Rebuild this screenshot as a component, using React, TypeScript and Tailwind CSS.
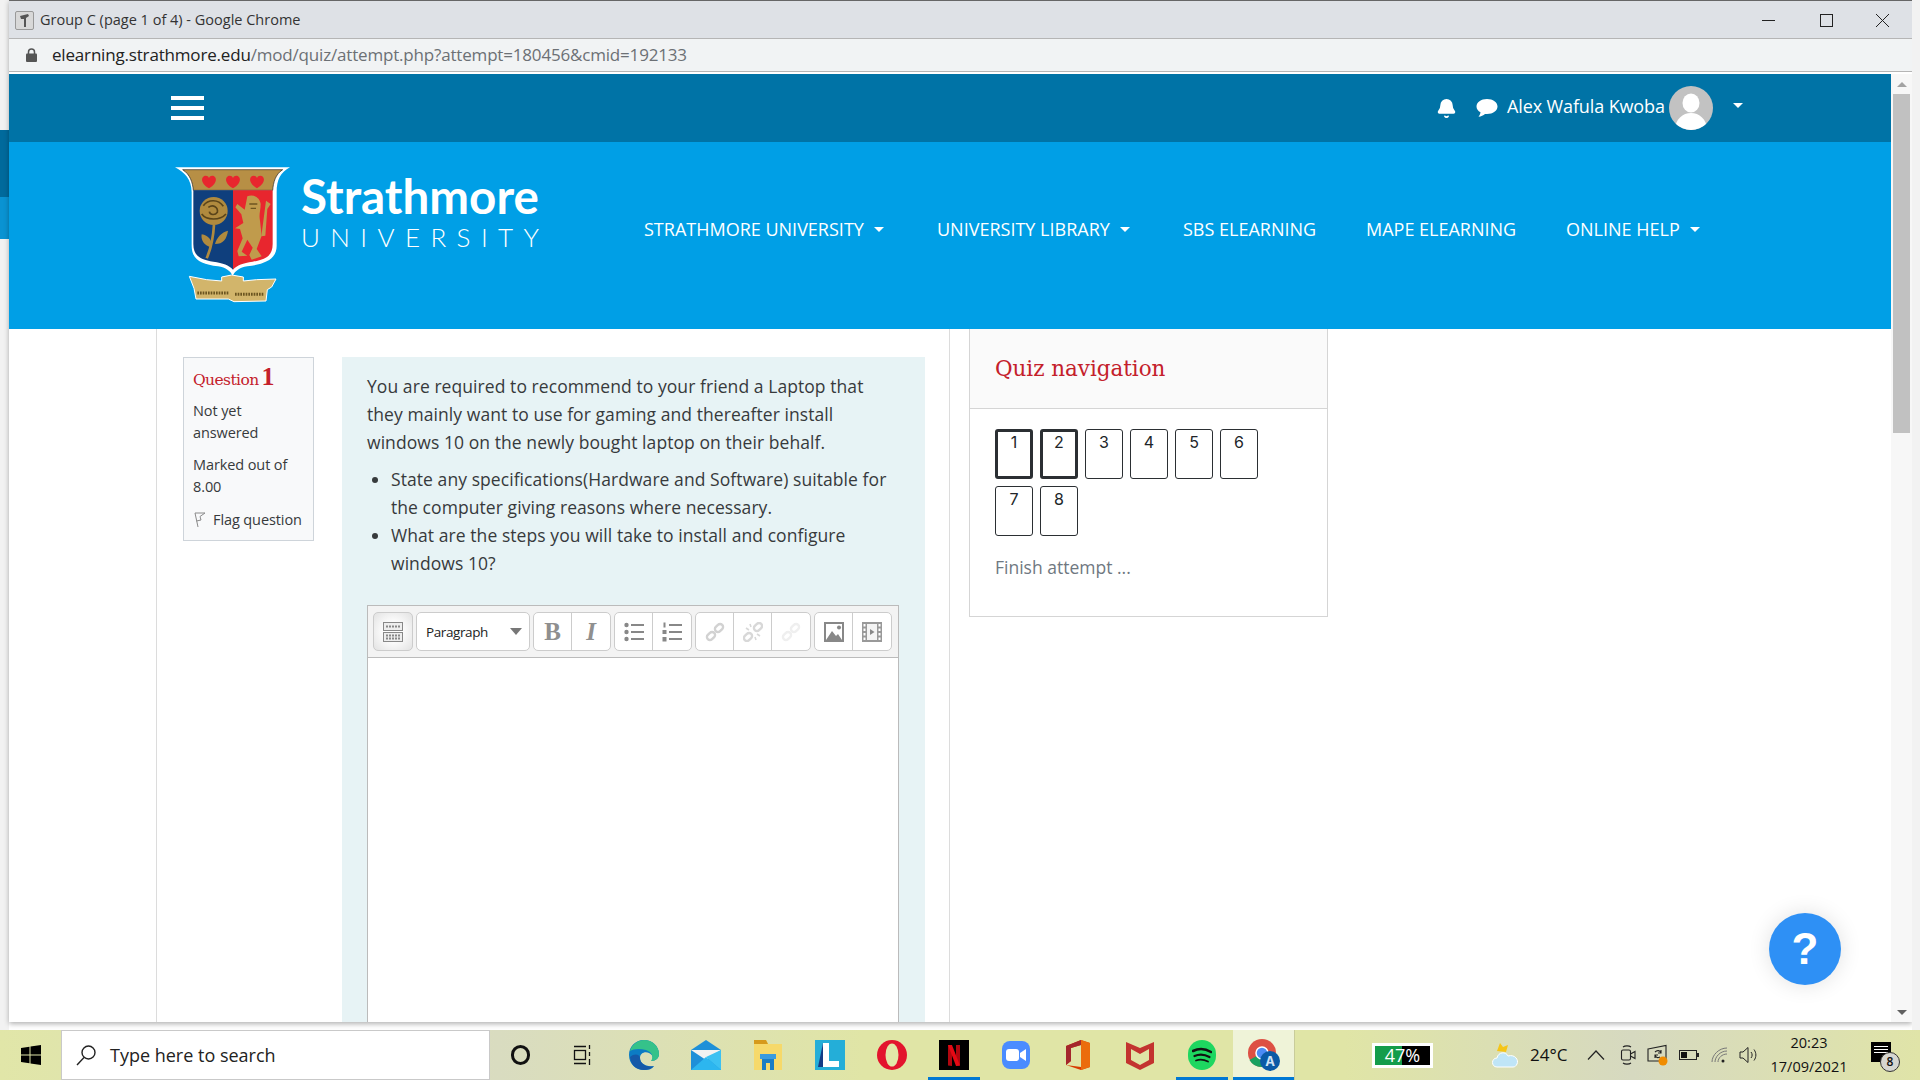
import React from "react";
import { Bell } from "lucide-react";

const sans = "font-['Open_Sans','Noto_Sans',sans-serif]";

function Caret({ className = "" }: { className?: string }) {
  return <span className={`inline-block w-0 h-0 border-l-[5px] border-r-[5px] border-t-[5px] border-l-transparent border-r-transparent border-t-white ${className}`} />;
}

function Crest() {
  return (
    <svg width="150" height="170" viewBox="0 0 450 510" className="shrink-0">
      <path d="M45 55H390C362 70 350 92 350 130V290C350 332 312 346 262 352C238 356 226 366 218 380C211 366 198 356 174 352C124 346 95 332 95 290V130C95 92 74 70 45 55Z" fill="#fff" />
      <path d="M68 62H368C346 76 340 100 338 124H100C98 100 90 76 68 62Z" fill="#b78f45" stroke="#222" strokeWidth="2" />
      <path d="M100 124H219V362C206 348 190 342 160 338C120 332 100 320 100 285Z" fill="#0f3f7d" />
      <path d="M219 124H338V285C338 320 318 332 278 338C248 342 232 348 219 362Z" fill="#e8262e" />
      {[147, 219, 291].map((x) => (
        <path key={x} d={`M${x} 118C${x - 30} 100 ${x - 22} 80 ${x - 10} 80C${x - 4} 80 ${x} 84 ${x} 88C${x} 84 ${x + 4} 80 ${x + 10} 80C${x + 22} 80 ${x + 30} 100 ${x} 118Z`} fill="#e8262e" />
      ))}
      <circle cx="161" cy="186" r="42" fill="#b08a3e" />
      <path d="M130 170C145 150 175 150 190 172M125 195C140 215 180 215 198 195M145 175C160 165 175 175 172 190C165 200 150 198 148 188" fill="none" stroke="#5a441a" strokeWidth="5" />
      <path d="M162 226C160 265 152 300 140 328" stroke="#b08a3e" strokeWidth="8" fill="none" />
      <path d="M155 295C130 290 122 270 125 256C145 258 158 275 155 295ZM165 285C170 265 185 250 204 245C200 270 190 285 165 285Z" fill="#b08a3e" />
      <path d="M262 142C280 135 300 145 302 165C302 185 296 195 300 215L305 260L290 300L305 322L275 332L268 318L278 296L262 272L245 308L262 320L236 322L232 306L248 268L240 240L225 238L250 222L244 196L226 175L232 165L254 182Z" fill="#c09b4c" />
      <path d="M268 165L292 165M272 178L288 178" stroke="#6e5520" strokeWidth="4" />
      <path d="M318 155L332 165L322 180L316 260L304 262Z" fill="#c09b4c" />
      <path d="M88 382L140 392L185 396V384L215 378L250 384V396L290 392L348 390L335 414L322 422L318 456L222 458L205 450L108 450L102 418Z" fill="#d2b56b" stroke="#fff" strokeWidth="3" />
      <path d="M112 432H205M225 436H312" stroke="#6b5520" strokeWidth="9" strokeDasharray="5 3" />
    </svg>
  );
}

function NavItem({ label, caret, w }: { label: string; caret?: boolean; w: string }) {
  return (
    <div className={`flex items-center shrink-0 ${w}`}>
      <span className="text-[18px] whitespace-nowrap">{label}</span>
      {caret && <Caret className="ml-[10px]" />}
    </div>
  );
}

function ToolIcon({ children, w = "w-[38px]", last }: { children: React.ReactNode; w?: string; last?: boolean }) {
  return <div className={`${w} h-full flex items-center justify-center ${last ? "" : "border-r border-[#ccc]"}`}>{children}</div>;
}

function Group({ children }: { children: React.ReactNode }) {
  return <div className="h-[39px] flex border border-[#ccc] rounded-[5px] bg-white shrink-0 overflow-hidden">{children}</div>;
}

function ChainIcon({ c, broken }: { c: string; broken?: boolean }) {
  return (
    <svg width="20" height="20" viewBox="0 0 20 20" fill="none" stroke={c} strokeWidth="2.4">
      <rect x="-4.5" y="-3" width="9" height="6" rx="3" transform={broken ? "translate(5 15) rotate(-45)" : "translate(6 14) rotate(-45)"} />
      <rect x="-4.5" y="-3" width="9" height="6" rx="3" transform={broken ? "translate(15 5) rotate(-45)" : "translate(14 6) rotate(-45)"} />
      {broken && <path d="M3 6L6 8M7 2L8 5M17 14L14 12M13 18L12 15" strokeWidth="1.6" />}
    </svg>
  );
}

function Toolbar() {
  return (
    <div className="h-[52px] bg-[#f3f3f3] border-b border-[#bbb] flex items-center gap-[3px] pl-[5px]">
      <div className="w-[40px] h-[39px] border border-[#ccc] rounded-[5px] bg-[radial-gradient(circle,#fff_30%,#e2e2e2_100%)] flex items-center justify-center shrink-0">
        <svg width="20" height="20" viewBox="0 0 20 20">
          <rect x="0.5" y="0.5" width="19" height="8" fill="#eee" stroke="#888" />
          <rect x="0.5" y="10.5" width="19" height="9" fill="#eee" stroke="#888" />
          <path d="M3 4.5H17M3 13.5H17M3 16.5H17" stroke="#888" strokeWidth="2" strokeDasharray="2 1" />
        </svg>
      </div>
      <div className="w-[114px] h-[39px] border border-[#ccc] rounded-[5px] bg-white flex items-center pl-[9px] pr-[7px] justify-between shrink-0">
        <span className="text-[13.5px] tracking-[-0.4px] text-[#222]">Paragraph</span>
        <span className="w-0 h-0 border-l-[6px] border-r-[6px] border-t-[7px] border-l-transparent border-r-transparent border-t-[#777]" />
      </div>
      <Group>
        <ToolIcon><span className="font-['Liberation_Serif',serif] font-bold text-[25px] text-[#8f8f8f]">B</span></ToolIcon>
        <ToolIcon last><span className="font-['Liberation_Serif',serif] font-bold italic text-[25px] text-[#8f8f8f]">I</span></ToolIcon>
      </Group>
      <Group>
        <ToolIcon>
          <svg width="20" height="20" viewBox="0 0 20 20" fill="#888">
            <circle cx="2.5" cy="3" r="2.2" /><circle cx="2.5" cy="10" r="2.2" /><circle cx="2.5" cy="17" r="2.2" />
            <rect x="7" y="2" width="13" height="2" /><rect x="7" y="9" width="13" height="2" /><rect x="7" y="16" width="13" height="2" />
          </svg>
        </ToolIcon>
        <ToolIcon last>
          <svg width="20" height="20" viewBox="0 0 20 20" fill="#888">
            <rect x="1.5" y="0.5" width="2" height="5" /><rect x="0.5" y="8" width="4" height="4" /><rect x="0.5" y="15" width="4" height="4.5" />
            <rect x="7" y="2" width="13" height="2" /><rect x="7" y="9" width="13" height="2" /><rect x="7" y="16" width="13" height="2" />
          </svg>
        </ToolIcon>
      </Group>
      <Group>
        <ToolIcon><ChainIcon c="#d2d2d2" /></ToolIcon>
        <ToolIcon><ChainIcon c="#d8d8d8" broken /></ToolIcon>
        <ToolIcon last><ChainIcon c="#efefef" /></ToolIcon>
      </Group>
      <Group>
        <ToolIcon>
          <svg width="20" height="20" viewBox="0 0 20 20">
            <rect x="1" y="1" width="18" height="18" fill="#fff" stroke="#888" strokeWidth="2" />
            <path d="M2 18L8 9L12 14L14 12L18 18Z" fill="#888" /><circle cx="15" cy="5.5" r="2" fill="#888" />
          </svg>
        </ToolIcon>
        <ToolIcon last>
          <svg width="20" height="20" viewBox="0 0 20 20">
            <rect x="0" y="0" width="20" height="20" fill="#999" />
            <rect x="5" y="2" width="10" height="16" fill="#f4f4f4" />
            {[2, 6.5, 11, 15.5].map((y) => (<g key={y}><rect x="1.5" y={y} width="2" height="2.5" fill="#fff" /><rect x="16.5" y={y} width="2" height="2.5" fill="#fff" /></g>))}
            <path d="M8 7L12.5 10L8 13Z" fill="#888" />
          </svg>
        </ToolIcon>
      </Group>
    </div>
  );
}

function QuizBtn({ n, current }: { n: number; current?: boolean }) {
  return (
    <div className={`w-[38px] h-[50px] rounded-[3px] border-[#2b2f33] flex justify-center font-['Inter','DejaVu_Sans',sans-serif] text-[16px] leading-[20px] text-[#212529] ${current ? "border-[3px]" : "border pt-[2px]"}`}>
      {n}
    </div>
  );
}

function Slot({ children, w = "w-[62px]", extra = "" }: { children: React.ReactNode; w?: string; extra?: string }) {
  return <div className={`${w} h-full shrink-0 relative flex items-center justify-center ${extra}`}>{children}</div>;
}

function Underline() {
  return <div className="absolute bottom-0 left-[5px] right-[5px] h-[3px] bg-[#0078d4]" />;
}

function App() {
  return (
    <div className={`w-[1920px] h-[1080px] overflow-hidden flex flex-col bg-white text-[#212529] ${sans}`}>
      <div className="flex h-[1030px] shrink-0">
        <div className="w-[9px] shrink-0 flex flex-col bg-[#f2f2f2]">
          <div className="h-[130px]" />
          <div className="h-[67px] bg-[#006a9c]" />
          <div className="h-[42px] bg-[#0a93d2]" />
        </div>
        <div className="w-[1903px] shrink-0 flex flex-col shadow-[0_2px_5px_rgba(0,0,0,0.3)] h-[1022px] bg-white">
          <div className="h-[38px] shrink-0 bg-[#dee1e6] border-t border-[#666] flex items-center pl-[6px] text-[14.5px] text-[#333]">
            <svg width="19" height="19" viewBox="0 0 19 19" className="mr-[6px] mt-[1px]">
              <rect x="0.5" y="0.5" width="18" height="18" rx="1.5" fill="#d8d8d8" stroke="#999" />
              <path d="M5 5L13 3L14 5L11 7V16H9V8L6 8Z" fill="#555" />
            </svg>
            <span className="grow whitespace-nowrap">Group C (page 1 of 4) - Google Chrome</span>
            <svg width="160" height="16" viewBox="0 0 160 16" fill="none" stroke="#222" strokeWidth="1">
              <path d="M10 8.5H23" />
              <rect x="68.5" y="2.5" width="12" height="12" />
              <path d="M124 2L137 15M137 2L124 15" />
            </svg>
          </div>
          <div className="h-[34px] shrink-0 bg-[#f1f3f4] border-t border-[#b5b5b5] border-b flex items-center pl-[17px] text-[17px] tracking-[-0.18px]">
            <svg width="11" height="14" viewBox="0 0 11 14" fill="#555" className="mr-[15px]">
              <path d="M2.5 6V4A3 3 0 018.5 4V6" fill="none" stroke="#555" strokeWidth="1.5" />
              <rect x="0" y="5.5" width="11" height="8.5" rx="1" />
            </svg>
            <span className="text-[#222]">elearning.strathmore.edu</span>
            <span className="text-[#6c7075]">/mod/quiz/attempt.php?attempt=180456&amp;cmid=192133</span>
          </div>
          <div className="h-[2px] shrink-0 bg-white" />
          <div className="flex grow min-h-0">
            <div className="w-[1882px] shrink-0 flex flex-col">
              <div className="h-[68px] shrink-0 bg-[#0073a6] flex items-center text-white">
                <div className="ml-[162px] w-[33px] h-[24px] flex flex-col justify-between">
                  <div className="h-[4px] bg-white" /><div className="h-[4px] bg-white" /><div className="h-[4px] bg-white" />
                </div>
                <div className="ml-[1232px] flex items-center">
                  <Bell className="w-[21px] h-[21px] fill-white text-white" />
                  <svg width="22" height="20" viewBox="0 0 22 20" fill="#fff" className="ml-[19px]">
                    <path d="M11 1C5 1 0.5 4.2 0.5 8.5C0.5 11 2 13 4.5 14.3C4.3 16 3.5 17.5 2.5 18.8C5 18.5 7.5 17.5 9 16H11C17 16 21.5 12.8 21.5 8.5C21.5 4.2 17 1 11 1Z" />
                  </svg>
                  <span className="ml-[9px] text-[18px] tracking-[-0.12px] whitespace-nowrap -mt-[4px]">Alex Wafula Kwoba</span>
                  <div className="ml-[4px] w-[44px] h-[44px] rounded-full bg-[#c2c2c2] overflow-hidden shrink-0">
                    <svg viewBox="0 0 44 44" width="44" height="44" fill="#fff">
                      <ellipse cx="22" cy="17" rx="8.5" ry="9.5" />
                      <path d="M6 44C6 33 14 27 22 27C30 27 38 33 38 44Z" />
                    </svg>
                  </div>
                  <Caret className="ml-[20px] -mt-[6px]" />
                </div>
              </div>
              <div className="h-[187px] shrink-0 bg-[#009fe6] flex items-center text-white">
                <div className="ml-[151px] -mt-[3px]"><Crest /></div>
                <div className="ml-[-9px] flex flex-col w-[343px] -mt-[50px]">
                  <span className="font-['Lato',sans-serif] font-bold text-[47.5px] leading-[53px]">Strathmore</span>
                  <span className="font-['Lato',sans-serif] font-light text-[26px] leading-[30px] tracking-[10.4px] whitespace-nowrap">UNIVERSITY</span>
                </div>
                <div className="flex -mt-[12px]">
                  <NavItem label="STRATHMORE UNIVERSITY" caret w="w-[293px]" />
                  <NavItem label="UNIVERSITY LIBRARY" caret w="w-[246px]" />
                  <NavItem label="SBS ELEARNING" w="w-[183px]" />
                  <NavItem label="MAPE ELEARNING" w="w-[200px]" />
                  <NavItem label="ONLINE HELP" caret w="w-[160px]" />
                </div>
              </div>
              <div className="flex grow min-h-0 overflow-hidden relative">
                <div className="w-[148px] shrink-0 border-r border-[#dcdcdc]" />
                <div className="w-[793px] shrink-0 border-r border-[#dcdcdc] pt-[28px] pl-[26px] flex items-start h-full">
                  <div className="w-[131px] shrink-0 border border-[#ced4da] bg-[#f8f9fa] pl-[9px] pt-[4px] h-[184px] text-[14.5px] leading-[22px] tracking-[-0.1px] text-[#373a3c]">
                    <div className="text-[#c4202a] font-['DejaVu_Serif',serif] text-[15.5px] leading-[30px] tracking-[-0.6px] flex items-baseline">
                      Question<span className="font-['Liberation_Serif',serif] font-bold text-[26px] ml-[3px]">1</span>
                    </div>
                    <div className="mt-[5px]">Not yet<br />answered</div>
                    <div className="mt-[10px]">Marked out of<br />8.00</div>
                    <div className="mt-[11px] flex items-center">
                      <svg width="13" height="16" viewBox="0 0 13 16" fill="none" stroke="#8a8a8a" strokeWidth="1" className="mr-[7px] shrink-0">
                        <path d="M2 1L5 15M2 1H12L7 4.5L8 8L3.5 9" />
                      </svg>
                      <span className="whitespace-nowrap">Flag question</span>
                    </div>
                  </div>
                  <div className="ml-[28px] w-[583px] shrink-0 h-[900px] bg-[#e7f3f5] pl-[25px] pr-[26px] pt-[15px] text-[17.5px] leading-[28px] tracking-[0.07px] text-[#373a3c]">
                    <p>You are required to recommend to your friend a Laptop that they mainly want to use for gaming and thereafter install windows 10 on the newly bought laptop on their behalf.</p>
                    <ul className="list-disc pl-[24px] mt-[9px] mb-[28px]">
                      <li>State any specifications(Hardware and Software) suitable for the computer giving reasons where necessary.</li>
                      <li>What are the steps you will take to install and configure windows 10?</li>
                    </ul>
                    <div className="border border-[#bbb] h-[500px] bg-white tracking-normal">
                      <Toolbar />
                    </div>
                  </div>
                </div>
                <div className="ml-[19px] w-[359px] h-[288px] shrink-0 border border-[#d5d5d5] border-t-0 flex flex-col">
                  <div className="h-[80px] bg-[#fafafa] border-b border-[#d5d5d5] pl-[25px] pt-[2px] flex items-center">
                    <span className="font-['DejaVu_Serif',serif] text-[21.5px] tracking-[-0.05px] text-[#c4202a]">Quiz navigation</span>
                  </div>
                  <div className="pl-[25px] pt-[20px] flex flex-col">
                    <div className="flex gap-[7px]">
                      <QuizBtn n={1} current /><QuizBtn n={2} current /><QuizBtn n={3} /><QuizBtn n={4} /><QuizBtn n={5} /><QuizBtn n={6} />
                    </div>
                    <div className="flex gap-[7px] mt-[7px]">
                      <QuizBtn n={7} /><QuizBtn n={8} />
                    </div>
                    <div className="mt-[19px] text-[17.5px] leading-[24px] text-[#6f7881]">Finish attempt ...</div>
                  </div>
                </div>
                <div className="absolute left-[1760px] top-[584px] w-[72px] h-[72px] rounded-full bg-[#2e90f5] shadow-[0_0_22px_rgba(0,0,0,0.12)] flex items-center justify-center text-white font-['Liberation_Sans',sans-serif] font-bold text-[44px]">?</div>
              </div>
            </div>
            <div className="w-[21px] shrink-0 bg-[#f7f7f7] flex flex-col items-center">
              <div className="h-[20px] shrink-0 flex items-center justify-center"><span className="w-0 h-0 border-l-[5px] border-r-[5px] border-b-[5px] border-l-transparent border-r-transparent border-b-[#a3a3a3]" /></div>
              <div className="w-[17px] h-[339px] bg-[#c1c1c1] shrink-0" />
              <div className="grow" />
              <div className="h-[20px] shrink-0 flex items-center justify-center"><span className="w-0 h-0 border-l-[5px] border-r-[5px] border-t-[5px] border-l-transparent border-r-transparent border-t-[#606060]" /></div>
            </div>
          </div>
        </div>
        <div className="grow bg-[#f2f2f2]" />
      </div>

      <div className="h-[50px] shrink-0 flex items-center bg-[linear-gradient(90deg,#e1e6a8_0%,#d9dcc0_26%,#e0e5a6_45%,#e0e5a6_70%,#d6d9c0_85%,#e0e4a8_100%)] text-[#111]">
        <Slot w="w-[61px]">
          <svg width="20" height="20" viewBox="0 0 20 20" fill="#000">
            <path d="M0 3L8.5 1.7V9.4H0ZM9.5 1.5L20 0V9.4H9.5ZM0 10.5H8.5V18.3L0 17ZM9.5 10.5H20V20L9.5 18.5Z" />
          </svg>
        </Slot>
        <div className="w-[429px] h-full shrink-0 bg-white border border-[#c9c9c9] flex items-center pl-[13px]">
          <svg width="22" height="22" viewBox="0 0 22 22" fill="none" stroke="#222" strokeWidth="1.4">
            <circle cx="13.5" cy="8.5" r="6.5" /><path d="M9 13.5L2 21" />
          </svg>
          <span className="ml-[13px] text-[18px] text-[#222]">Type here to search</span>
        </div>
        <Slot w="w-[60px]"><div className="w-[19px] h-[20px] rounded-full border-[3px] border-[#111]" /></Slot>
        <Slot w="w-[63px]">
          <svg width="20" height="22" viewBox="0 0 20 22" fill="none" stroke="#111" strokeWidth="1.3">
            <rect x="2.5" y="6.5" width="11" height="9" /><path d="M2 2.5H14M2 19.5H14M17.5 1V5M17.5 8V12M17.5 15V21" />
          </svg>
        </Slot>
        <Slot>
          <svg width="30" height="30" viewBox="0 0 30 30">
            <path d="M15 0C6 0 0 7 0 15C0 24 7 30 15 30C20 30 23 29 25 26C20 27 11 25 11 18C11 13 16 11 20 13C25 15 24 20 22 21C27 21 30 18 30 14C30 6 23 0 15 0Z" fill="#0c7cc4" />
            <path d="M1 11C3 4 9 0 15 0C23 0 30 6 30 14C30 18 27 21 22 21C25 17 23 12 17 10C10 8 4 9 1 11Z" fill="#35c28a" />
            <path d="M11 18C11 24 18 28 25 26C22 29 19 30 15 30C7 30 2 25 1 17C5 13 11 14 11 18Z" fill="#1559a8" />
          </svg>
        </Slot>
        <Slot>
          <svg width="30" height="30" viewBox="0 0 30 30">
            <path d="M0 10L15 0L30 10V30H0Z" fill="#1e90d8" />
            <path d="M0 10H30L15 20Z" fill="#f2f2f2" /><path d="M0 30L15 17L30 30Z" fill="#2cb6ef" /><path d="M30 10V30L15 17Z" fill="#3cc1f2" />
          </svg>
        </Slot>
        <Slot>
          <svg width="28" height="30" viewBox="0 0 28 30">
            <path d="M0 0H12L14 4H28V30H0Z" fill="#f6d96a" /><path d="M0 0H12L14 4H0Z" fill="#d69a1b" />
            <path d="M8 18H20V30H16V23H12V30H8Z" fill="#1a7dc4" /><path d="M6 14H22V19H6Z" fill="#3a9bde" />
          </svg>
        </Slot>
        <Slot>
          <div className="w-[30px] h-[30px] bg-[#24aed8] flex items-center justify-center relative overflow-hidden">
            <svg width="30" height="30" viewBox="0 0 30 30"><path d="M8 3H14V21H24V27H6Z" fill="#fff" /><path d="M8 3V27H6L3 27Z" fill="#123b86" /></svg>
          </div>
        </Slot>
        <Slot>
          <svg width="30" height="30" viewBox="0 0 30 30">
            <ellipse cx="15" cy="15" rx="15" ry="15" fill="#e3142d" /><ellipse cx="15" cy="15" rx="6.5" ry="11.5" fill="#e2e7a8" />
          </svg>
        </Slot>
        <Slot>
          <div className="w-[30px] h-[30px] bg-black flex items-center justify-center">
            <svg width="12" height="21" viewBox="0 0 12 21"><path d="M0 0H4V21L0 20.5ZM8 0H12V20.5L8 21Z" fill="#b1060f" /><path d="M0 0H4L12 20.5L8 21Z" fill="#e50914" /></svg>
          </div>
          <Underline />
        </Slot>
        <Slot>
          <div className="w-[28px] h-[28px] rounded-[8px] bg-[#4a8cff] flex items-center justify-center">
            <svg width="20" height="12" viewBox="0 0 20 12" fill="#fff"><rect x="0" y="0" width="13" height="12" rx="3" /><path d="M14 4L20 0V12L14 8Z" /></svg>
          </div>
        </Slot>
        <Slot>
          <svg width="24" height="30" viewBox="0 0 24 30">
            <path d="M0 6L15 0L24 3V27L15 30L0 25L15 27V5L5 8V21L0 25Z" fill="#d83b01" /><path d="M15 0L24 3V27L15 30Z" fill="#eb6c0c" /><path d="M0 6L15 0V5L5 8V21L0 25Z" fill="#a4262c" />
          </svg>
        </Slot>
        <Slot>
          <svg width="28" height="30" viewBox="0 0 28 30"><path d="M0 2L14 8L28 2V23L14 30L0 23ZM5 9V20L14 25L23 20V9L14 14Z" fill="#c3332f" fillRule="evenodd" /></svg>
        </Slot>
        <Slot>
          <div className="w-[28px] h-[30px] rounded-full bg-[#1ed760] flex items-center justify-center">
            <svg width="20" height="16" viewBox="0 0 20 16" fill="none" stroke="#111" strokeLinecap="round"><path d="M1 4C7 1 14 2 19 5" strokeWidth="2.6" /><path d="M2.5 9C7 7 13 7.5 17.5 10" strokeWidth="2.2" /><path d="M4 13.5C8 12 12 12.5 16 14.5" strokeWidth="1.8" /></svg>
          </div>
          <Underline />
        </Slot>
        <Slot w="w-[62px]" extra="bg-[#eff3d8] border-r border-[#c9cc9a]">
          <svg width="32" height="32" viewBox="0 0 32 32">
            <circle cx="14" cy="14" r="14" fill="#dd5044" /><path d="M14 14L1.5 21A14 14 0 0014 28Z" fill="#1aa160" /><path d="M14 14H28A14 14 0 0119 27Z" fill="#ffcd40" /><circle cx="14" cy="14" r="6" fill="#4c8bf5" stroke="#fff" strokeWidth="1.5" />
            <circle cx="22" cy="22" r="10" fill="#0b5aa6" />
            <text x="22" y="27" textAnchor="middle" fontSize="13" fontWeight="700" fill="#cfe3f5" fontFamily="Inter, sans-serif">A</text>
          </svg>
          <div className="absolute bottom-0 left-0 right-0 h-[3px] bg-[#0078d4]" />
        </Slot>
        <div className="ml-[77px] w-[61px] h-[25px] shrink-0 border-[3px] border-white flex relative bg-black text-[18px] leading-[19px] text-white">
          <div className="w-[27px] bg-[#149c4a]" />
          <span className="absolute inset-0 flex items-center justify-center">47%</span>
        </div>
        <div className="ml-[58px] shrink-0">
          <svg width="28" height="28" viewBox="0 0 28 28">
            <path d="M6 10L9 2L12 6L17 4L15 11Z" fill="#f5c518" />
            <path d="M6 26C0 26 0 17 6 17C7 11 15 10 17 15C24 13 28 19 26 23C25 25 24 26 22 26Z" fill="#bfe5f7" stroke="#fff" strokeWidth="1" />
          </svg>
        </div>
        <span className="ml-[11px] text-[17px] whitespace-nowrap w-[36px]">24°C</span>
        <svg width="18" height="10" viewBox="0 0 18 10" fill="none" stroke="#222" strokeWidth="1.2" className="ml-[21px] shrink-0"><path d="M1 9.5L9 1L17 9.5" /></svg>
        <svg width="16" height="20" viewBox="0 0 16 20" fill="none" stroke="#222" strokeWidth="1.1" className="ml-[15px] shrink-0"><rect x="1.5" y="5" width="9" height="10" rx="1.5" /><path d="M10.5 9L15 6.5V13.5L10.5 11M3 2C5 0.5 9 0.5 11 2M3 18C5 19.5 9 19.5 11 18" /></svg>
        <svg width="22" height="22" viewBox="0 0 22 22" fill="none" stroke="#222" strokeWidth="1.1" className="ml-[11px] shrink-0"><path d="M1 5L19 1.5V17H1Z" /><path d="M8 8C10 6 13 6 14 9M13 13C11 14 9 14 8 11M14 6V9H11M8 14V11H11" /><circle cx="16" cy="17" r="4.5" fill="#f08c00" stroke="none" /></svg>
        <svg width="20" height="10" viewBox="0 0 20 10" fill="none" stroke="#222" strokeWidth="1" className="ml-[10px] shrink-0"><rect x="0.5" y="0.5" width="17" height="9" /><rect x="2" y="2" width="6" height="6" fill="#111" stroke="none" /><rect x="18" y="3" width="2" height="4" fill="#222" stroke="none" /></svg>
        <svg width="17" height="17" viewBox="0 0 17 17" fill="none" stroke="#777" strokeWidth="1" className="ml-[12px] shrink-0"><path d="M1 15C1 8 8 1 16 1M4 15C4 10 9 4 16 4M7 15C7 11 11 7 16 7" /><circle cx="12" cy="14" r="1.5" fill="#222" stroke="none" /></svg>
        <svg width="20" height="18" viewBox="0 0 20 18" fill="none" stroke="#222" strokeWidth="1" className="ml-[11px] shrink-0"><path d="M1 6H4L9 1.5V16.5L4 12H1ZM12 6C13.5 8 13.5 10 12 12M15 3.5C17.5 7 17.5 11 15 14.5" /></svg>
        <div className="ml-[12px] w-[76px] shrink-0 flex flex-col items-center text-[14.5px] leading-[24px] whitespace-nowrap">
          <span>20:23</span><span>17/09/2021</span>
        </div>
        <div className="ml-[24px] w-[20px] h-[20px] bg-black relative shrink-0 mb-[6px] flex flex-col gap-[2px] pt-[4px] px-[3px]">
          <div className="h-[1px] bg-white" /><div className="h-[1px] bg-white" /><div className="h-[1px] bg-white" />
          <div className="absolute left-[9px] top-[10px] w-[20px] h-[20px] rounded-full bg-[#d6d6d0] border border-[#333] flex items-center justify-center text-[12px] font-semibold text-[#111]">8</div>
        </div>
      </div>
    </div>
  );
}

export default App;
